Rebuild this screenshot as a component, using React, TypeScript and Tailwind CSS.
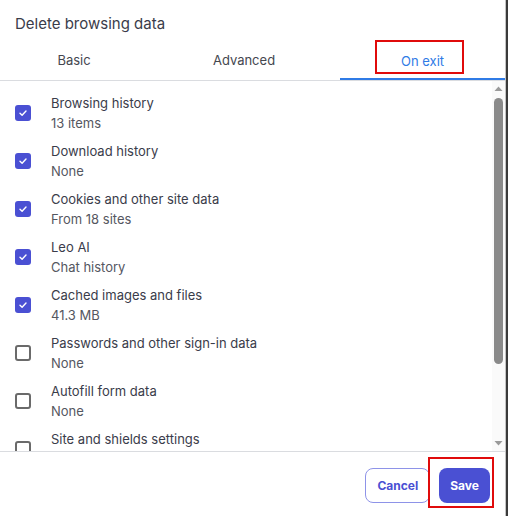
import React from 'react';

const items = [
  { label: 'Browsing history', sub: '13 items', checked: true },
  { label: 'Download history', sub: 'None', checked: true },
  { label: 'Cookies and other site data', sub: 'From 18 sites', checked: true },
  { label: 'Leo AI', sub: 'Chat history', checked: true },
  { label: 'Cached images and files', sub: '41.3 MB', checked: true },
  { label: 'Passwords and other sign-in data', sub: 'None', checked: false },
  { label: 'Autofill form data', sub: 'None', checked: false },
  { label: 'Site and shields settings', sub: '', checked: false },
];

function Checkbox({ checked }: { checked: boolean }) {
  if (checked) {
    return (
      <div className="w-4 h-4 rounded-[3px] bg-[#4a50d3] flex items-center justify-center shrink-0">
        <svg width="10" height="10" viewBox="0 0 10 10" fill="none">
          <path d="M2 5.2 L4.1 7.2 L8 3" stroke="white" strokeWidth="1.4" strokeLinecap="round" strokeLinejoin="round" />
        </svg>
      </div>
    );
  }
  return <div className="w-4 h-4 rounded-[3px] border-2 border-[#6a6a6a] bg-white shrink-0"></div>;
}

export default function App() {
  return (
    <div className="w-[508px] h-[516px] bg-[#3a3a3a] flex" style={{ fontFamily: 'Inter, "Noto Sans", sans-serif' }}>
      <div className="w-[506px] h-full bg-white border-r border-[#c4c4c4] flex flex-col">
        {/* Title */}
        <div className="h-[44px] pl-[15px] pt-[13px] text-[15px] leading-[22px] text-[#3a3c4a]">
          Delete browsing data
        </div>

        {/* Tabs */}
        <div className="flex h-[37px] border-b border-[#dadce0]">
          <div className="w-[148px] flex items-center justify-center text-[13px] text-[#45474f] pb-[2px]">Basic</div>
          <div className="w-[192px] flex items-center justify-center text-[13px] text-[#45474f] pb-[2px]">Advanced</div>
          <div className="relative flex-1 flex items-center justify-center text-[13px] text-[#2f7be6] border-b-2 border-[#2f7be6] pt-[2px]">
            On exit
            <div className="absolute left-[35px] top-[-4px] w-[89px] h-[34px] border-2 border-[#e00b0b]"></div>
          </div>
        </div>

        {/* Scroll area */}
        <div className="flex h-[370px] overflow-hidden">
          <div className="flex-1 pt-[8px] overflow-hidden">
            {items.map((item, i) => (
              <div key={i} className="h-[48px] flex items-center pl-[15px] gap-[20px]">
                <Checkbox checked={item.checked} />
                <div className="flex flex-col">
                  <span className="text-[13px] leading-[20px] text-[#3a3c4a]">{item.label}</span>
                  {item.sub ? (
                    <span className="text-[13px] leading-[20px] text-[#55575f]">{item.sub}</span>
                  ) : (
                    <span className="h-[20px]"></span>
                  )}
                </div>
              </div>
            ))}
          </div>
          {/* Scrollbar */}
          <div className="w-[13px] bg-[#fafafa] flex flex-col items-center">
            <svg width="9" height="14" viewBox="0 0 9 14" className="shrink-0">
              <path d="M0.5 10 L4.5 5.5 L8.5 10 Z" fill="#9a9a9a" />
            </svg>
            <div className="w-[9px] h-[266px] mt-[3px] rounded-full bg-[#8a8a8a]"></div>
            <div className="flex-1"></div>
            <svg width="9" height="14" viewBox="0 0 9 14" className="shrink-0">
              <path d="M0.5 4 L4.5 8.5 L8.5 4 Z" fill="#9a9a9a" />
            </svg>
          </div>
        </div>

        {/* Footer */}
        <div className="flex-1 border-t border-[#dadce0] flex items-start justify-end pr-[15px] pt-[16px] gap-[9px]">
          <button className="h-[35px] px-[11px] rounded-[8px] border border-[#8e93e8] bg-white text-[12px] font-bold text-[#4a50d3]">
            Cancel
          </button>
          <div className="relative">
            <button className="h-[35px] px-[11px] rounded-[8px] bg-[#4a50d3] text-[12px] font-bold text-white">
              Save
            </button>
            <div className="absolute left-[-11px] top-[-11px] w-[66px] h-[51px] border-2 border-[#e00b0b]"></div>
          </div>
        </div>
      </div>
    </div>
  );
}
